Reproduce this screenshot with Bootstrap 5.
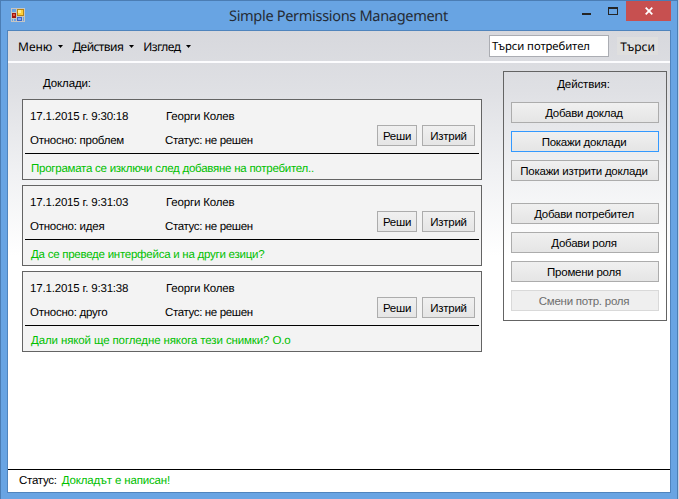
<!DOCTYPE html>
<html lang="bg">
<head>
<meta charset="utf-8">
<meta name="viewport" content="width=device-width, initial-scale=1">
<title>Simple Permissions Management</title>
<link href="https://cdn.jsdelivr.net/npm/bootstrap@5.3.0/dist/css/bootstrap.min.css" rel="stylesheet">
<style>
html, body { height: 100%; overflow: hidden; }
body { background: #cbd5e4; font: 11.5px/16px "Liberation Sans", Arial, sans-serif; letter-spacing: -.25px; color: #000; white-space: nowrap; text-rendering: geometricPrecision; }
.win { width: 678px; height: 499px; background: #68a4e3; border: 1px solid #4b7db4; border-bottom: 0; }
.titlebar { height: 29px; }
.win-icon { margin: 7px 0 0 10px; }
.win-title { font: 14.6px/20px "Noto Sans", "Open Sans", sans-serif; letter-spacing: -.35px; color: #252c36; margin-left: 204px; padding-top: 5px; width: 240px; }
.win-controls { margin-right: 6px; }
.min-box { width: 9px; height: 2px; background: #252525; margin: 12px 17px 0 0; }
.max-box { width: 10px; height: 8px; border: 1px solid #252525; border-top-width: 2px; margin: 6px 8px 0 0; }
.close-box { width: 45px; height: 20px; background: #c75050; }
.client { width: 664px; height: 463px; margin-left: 6px; border: 1px solid #4f84bd; background: linear-gradient(#d7d8dd 0, #dfe0e4 60px, #f0f1f3 140px, #fff 225px); }
.toolbar { height: 32px; border-bottom: 2px solid #fcfcfe; padding: 0 12px 0 10px; font-family: "Noto Sans", sans-serif; letter-spacing: -.58px; font-size: 12px; }
.menu-item { color: #000; margin-right: 9px; }
.menu-item .t { padding-top: 1px; }
.menu-item:first-child { letter-spacing: 0; }
.menu-item svg { margin-left: 6px; }
.search-box { width: 120px; height: 22px; border: 1px solid #abadb3; border-radius: 0; padding: 2px 0 0 2px; font: 11.3px/18px "Noto Sans", sans-serif; letter-spacing: -.08px; color: #000; background: #fff; }
.search-btn { width: 41px; height: 18px; margin-left: 8px; background: #dfdfdf; line-height: 19px; letter-spacing: 0; }
.main-area { height: 406px; }
.reports { width: 460px; margin-left: 14px; }
.heading { height: 36px; padding: 13px 0 0 21px; letter-spacing: -.12px; }
.report { height: 81px; margin-bottom: 5px; border: 1px solid #646464; background: #f3f3f3; padding: 0 2px; }
.report-top { height: 54px; border-bottom: 1px solid #000; padding: 9px 3px 0 5px; }
.when { width: 135px; }
.who { width: 212px; }
.report-top .who div:first-child { padding-left: 1px; }
.line1 { letter-spacing: -.18px; }
.line2 { margin-top: 8px; }
.who .line2 { letter-spacing: -.36px; }
.msg, .ok { color: #00c000; }
.msg { padding: 7px 0 0 6px; }
.report:last-child .msg { letter-spacing: -.12px; }
.wbtn { height: 21px; border: 1px solid #acacac; border-radius: 0; padding: 0 2px 0 0; font-size: 11.5px; line-height: 20px; letter-spacing: -.25px; color: #000; background: linear-gradient(#f0f0f0, #e5e5e5); }
.solve { width: 40px; margin-right: 5px; }
.del { width: 53px; }
.report .wbtn { margin-top: 16px; padding-right: 0; }
.actions { width: 164px; height: 250px; margin: 8px 3px 0 0; border: 1px solid #646464; padding: 0 7px; }
.actions-title { height: 30px; padding: 5px 3px 0 0; letter-spacing: -.1px; }
.actions .wbtn { margin-bottom: 8px; }
.actions .wbtn.on { border-color: #3399ff; }
.actions .wbtn.last { margin-bottom: 22px; }
.actions .wbtn:disabled { color: #6d6d6d; background: #efefef; border-color: #d9d9d9; opacity: 1; }
.statusbar { height: 23px; border-top: 1px solid #000; padding: 3px 0 0 11px; }
.ok { margin-left: 5px; letter-spacing: -.17px; }
.t { display: inline-block; }
</style>
</head>
<body>
<div class="win">
  <div class="titlebar d-flex align-items-start">
    <svg class="win-icon flex-shrink-0" width="14" height="14" shape-rendering="crispEdges"><rect width="14" height="14" fill="#c5c5c4"/><rect x="1" y="1" width="4" height="3" fill="#68a4e3"/><rect x="1" y="11" width="1" height="2" fill="#68a4e3"/><rect x="3" y="11" width="2" height="2" fill="#68a4e3"/><rect x="12" y="9" width="1" height="4" fill="#68a4e3"/><rect x="1" y="5" width="4" height="5" fill="#a01610"/><rect x="2" y="6" width="2" height="2" fill="#e25a43"/><rect x="6" y="1" width="7" height="7" fill="#b88512"/><rect x="7" y="2" width="5" height="5" fill="#ffd03a"/><rect x="7" y="2" width="3" height="3" fill="#ffec8d"/><rect x="6" y="9" width="5" height="4" fill="#3c66c8"/><rect x="7" y="10" width="3" height="2" fill="#7da4f5"/></svg>
    <div class="win-title"><span class="t">Simple Permissions Management</span></div>
    <div class="win-controls d-flex align-items-start ms-auto">
      <div class="min-box"></div><div class="max-box"></div>
      <div class="close-box d-flex align-items-center justify-content-center"><svg width="8" height="8"><path d="M.7.7 7.3 7.3M7.3.7.7 7.3" stroke="#fff" stroke-width="1.8"/></svg></div>
    </div>
  </div>
  <div class="client">
    <nav class="toolbar d-flex align-items-center">
      <div class="menu-item d-flex align-items-center"><span class="t">Меню</span><svg width="5" height="3"><path d="M0 0h5L2.5 3z"/></svg></div>
      <div class="menu-item d-flex align-items-center"><span class="t">Действия</span><svg width="5" height="3"><path d="M0 0h5L2.5 3z"/></svg></div>
      <div class="menu-item d-flex align-items-center"><span class="t">Изглед</span><svg width="5" height="3"><path d="M0 0h5L2.5 3z"/></svg></div>
      <div class="search-box ms-auto"><span class="t">Търси потребител</span></div>
      <div class="search-btn text-center"><span class="t">Търси</span></div>
    </nav>
    <main class="main-area d-flex justify-content-between align-items-start">
      <section class="reports">
        <div class="heading"><span class="t">Доклади:</span></div>
        <article class="report">
          <div class="report-top d-flex">
            <div class="when"><div class="line1">17.1.2015 г. 9:30:18</div><div class="line2">Относно: проблем</div></div>
            <div class="who"><div class="line1">Георги Колев</div><div class="line2">Статус: не решен</div></div>
            <button class="btn wbtn solve">Реши</button><button class="btn wbtn del">Изтрий</button>
          </div>
          <div class="msg">Програмата се изключи след добавяне на потребител..</div>
        </article>
        <article class="report">
          <div class="report-top d-flex">
            <div class="when"><div class="line1">17.1.2015 г. 9:31:03</div><div class="line2">Относно: идея</div></div>
            <div class="who"><div class="line1">Георги Колев</div><div class="line2">Статус: не решен</div></div>
            <button class="btn wbtn solve">Реши</button><button class="btn wbtn del">Изтрий</button>
          </div>
          <div class="msg">Да се преведе интерфейса и на други езици?</div>
        </article>
        <article class="report">
          <div class="report-top d-flex">
            <div class="when"><div class="line1">17.1.2015 г. 9:31:38</div><div class="line2">Относно: друго</div></div>
            <div class="who"><div class="line1">Георги Колев</div><div class="line2">Статус: не решен</div></div>
            <button class="btn wbtn solve">Реши</button><button class="btn wbtn del">Изтрий</button>
          </div>
          <div class="msg">Дали някой ще погледне някога тези снимки? О.о</div>
        </article>
      </section>
      <aside class="actions d-flex flex-column">
        <div class="actions-title text-center"><span class="t">Действия:</span></div>
        <button class="btn wbtn">Добави доклад</button>
        <button class="btn wbtn on">Покажи доклади</button>
        <button class="btn wbtn last">Покажи изтрити доклади</button>
        <button class="btn wbtn">Добави потребител</button>
        <button class="btn wbtn">Добави роля</button>
        <button class="btn wbtn">Промени роля</button>
        <button class="btn wbtn" disabled>Смени потр. роля</button>
      </aside>
    </main>
    <footer class="statusbar"><span class="t">Статус:</span><span class="ok t">Докладът е написан!</span></footer>
  </div>
</div>
<script src="https://cdn.jsdelivr.net/npm/bootstrap@5.3.0/dist/js/bootstrap.bundle.min.js"></script>
</body>
</html>
